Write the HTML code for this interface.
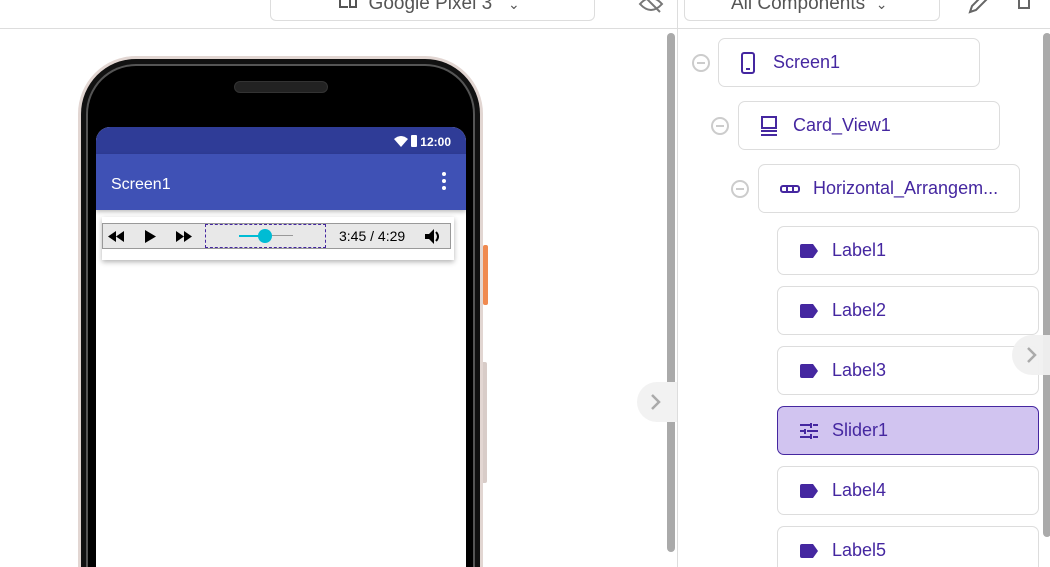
<!DOCTYPE html>
<html style="overflow:hidden;height:567px"><head><style>
*{box-sizing:border-box;margin:0;padding:0}
body{width:1050px;height:567px;overflow:hidden;background:#fff;font-family:"Liberation Sans",sans-serif;position:relative}
.a{position:absolute}
.item{position:absolute;height:49px;border:1px solid #ddd;border-radius:7px;background:#fff;color:#4527a0;font-size:18px;display:flex;align-items:center}
.item svg{position:absolute;left:22px}
.item span{position:absolute;left:54px}
.min{position:absolute;width:18px;height:18px;border:2px solid #ccc;border-radius:50%}
.min:after{content:"";position:absolute;left:3px;top:6px;width:8px;height:2px;background:#ccc}
</style></head><body>
<div class="a" style="left:0;top:28px;width:1050px;height:1px;background:#ddd"></div>
<div class="a" style="left:270px;top:-10px;width:325px;height:31px;border:1px solid #ddd;border-radius:6px"></div>
<div class="a" style="left:338px;top:-7px;font-size:19px;color:#555">
<svg width="20" height="16" style="vertical-align:-2px" viewBox="0 0 20 16"><path d="M2 0v12h8M12 4h6v8h-6z" stroke="#555" stroke-width="2" fill="none"/></svg>
&nbsp;Google Pixel 3 &nbsp;&nbsp;<span style="font-size:14px">&#8964;</span></div>
<svg class="a" style="left:638px;top:-6px" width="26" height="20" viewBox="0 0 26 20"><path d="M2 10q11-12 22 0q-11 12-22 0z" stroke="#777" stroke-width="2" fill="none"/><path d="M4 0L22 18" stroke="#777" stroke-width="2"/></svg>
<div class="a" style="left:677px;top:0;width:1px;height:567px;background:#ddd"></div>
<div class="a" style="left:684px;top:-10px;width:256px;height:31px;border:1px solid #ddd;border-radius:6px"></div>
<div class="a" style="left:731px;top:-7px;font-size:19px;color:#555">All Components &nbsp;<span style="font-size:14px">&#8964;</span></div>
<svg class="a" style="left:966px;top:-4px" width="24" height="18"><path d="M4 16l2-6 12-12 4 4-12 12z" stroke="#666" stroke-width="2" fill="none"/></svg>
<svg class="a" style="left:1017px;top:-4px" width="16" height="18"><path d="M2 0v12h10v-12" stroke="#666" stroke-width="2" fill="none"/></svg>
<div class="a" style="left:667px;top:33px;width:8px;height:519px;background:#aaa;border-radius:4px"></div>
<div class="a" style="left:637px;top:382px;width:40px;height:40px;border-radius:20px 0 0 20px;background:#f2f2f2"></div>
<svg class="a" style="left:650px;top:393px" width="12" height="18"><path d="M2 2l7 7-7 7" stroke="#aaa" stroke-width="2.5" fill="none"/></svg>
<div class="a" style="left:483px;top:245px;width:5px;height:60px;background:#f08a50;border-radius:2px"></div>
<div class="a" style="left:481px;top:362px;width:6px;height:121px;background:#d8ccc8;border-radius:2px"></div>
<div class="a" style="left:78px;top:56px;width:405px;height:511px;border-radius:58px 58px 0 0;background:#e2d6d2"></div>
<div class="a" style="left:81px;top:59px;width:399px;height:508px;border-radius:55px 55px 0 0;background:#111"></div>
<div class="a" style="left:86px;top:64px;width:389px;height:503px;border-radius:50px 50px 0 0;border:2px solid #555;border-bottom:0;background:#000"></div>
<div class="a" style="left:234px;top:81px;width:94px;height:12px;border-radius:6px;background:#222;border:1px solid #333"></div>
<div class="a" style="left:96px;top:127px;width:370px;height:440px;background:#fff;border-radius:14px 14px 0 0;overflow:hidden">
 <div style="height:27px;background:#2f3c97;color:#fff;font-size:12px;font-weight:bold;text-align:right;padding:8px 15px 0 0">
  <svg width="14" height="11" style="vertical-align:-1px"><path d="M0 3q7-6 14 0l-7 8z" fill="#fff"/></svg>
  <svg width="6" height="12" style="vertical-align:-1px"><rect x="0" y="0" width="6" height="12" rx="1" fill="#fff"/></svg> 12:00</div>
 <div style="height:56px;background:#3f51b5;color:#fff;font-size:16px;padding:22px 0 0 15px;position:relative;box-shadow:0 2px 4px rgba(0,0,0,.25)">Screen1
  <div style="position:absolute;right:20px;top:18px;width:4px;line-height:0">
   <div style="width:4px;height:4px;border-radius:2px;background:#fff;margin-bottom:3px"></div><div style="width:4px;height:4px;border-radius:2px;background:#fff;margin-bottom:3px"></div><div style="width:4px;height:4px;border-radius:2px;background:#fff"></div></div></div>
 <div style="position:absolute;left:6px;top:90px;width:352px;height:43px;background:#fff;box-shadow:0 2px 5px rgba(0,0,0,.3)">
  <div style="position:absolute;left:0;top:6px;width:349px;height:26px;background:#e8e8e8;border:1px solid #999">
   <svg class="a" style="left:5px;top:7px" width="18" height="11"><path d="M8 0v11L0 5.5zM16 0v11L8 5.5z" fill="#000"/></svg>
   <svg class="a" style="left:42px;top:6px" width="12" height="13"><path d="M0 0v13l11-6.5z" fill="#000"/></svg>
   <svg class="a" style="left:73px;top:7px" width="18" height="11"><path d="M0 0v11l8-5.5zM8 0v11l8-5.5z" fill="#000"/></svg>
   <div class="a" style="left:102px;top:0;width:121px;height:24px;border:1px dashed #4527a0"></div>
   <div class="a" style="left:136px;top:11px;width:54px;height:1px;background:#999"></div>
   <div class="a" style="left:136px;top:11px;width:26px;height:2px;background:#00bcd4"></div>
   <div class="a" style="left:155px;top:5px;width:14px;height:14px;border-radius:7px;background:#00bcd4"></div>
   <div class="a" style="left:236px;top:4px;font-size:14px;color:#000">3:45 / 4:29</div>
   <svg class="a" style="left:322px;top:5px" width="16" height="15"><path d="M0 5h4l5-5v15l-5-5H0z" fill="#000"/><path d="M11 3q4 4.5 0 9" stroke="#000" stroke-width="2" fill="none"/></svg>
  </div></div>
</div>
<div class="min" style="left:692px;top:54px"></div>
<div class="min" style="left:711px;top:117px"></div>
<div class="min" style="left:731px;top:180px"></div>
<div class="item" style="left:718px;top:38px;width:262px"><svg width="14" height="22" style="left:22px"><rect x="1" y="1" width="12" height="20" rx="2" stroke="#4527a0" stroke-width="2" fill="none"/><rect x="5" y="16" width="4" height="2" fill="#4527a0"/></svg><span>Screen1</span></div>
<div class="item" style="left:738px;top:101px;width:262px"><svg width="18" height="20" style="left:21px"><rect x="2" y="1" width="14" height="11" stroke="#4527a0" stroke-width="2" fill="none"/><rect x="1" y="14" width="16" height="2" fill="#4527a0"/><rect x="1" y="18" width="16" height="2" fill="#4527a0"/></svg><span>Card_View1</span></div>
<div class="item" style="left:758px;top:164px;width:262px"><svg width="20" height="8" style="left:21px"><rect x="1" y="1" width="18" height="6" rx="2" stroke="#4527a0" stroke-width="2" fill="none"/><path d="M7 1v6M13 1v6" stroke="#4527a0" stroke-width="2"/></svg><span>Horizontal_Arrangem...</span></div>
<div class="item" style="left:777px;top:226px;width:262px"><svg width="18" height="14" style="left:22px"><path d="M2 0h11l5 7-5 7H2a2 2 0 0 1-2-2V2a2 2 0 0 1 2-2z" fill="#4527a0"/></svg><span>Label1</span></div>
<div class="item" style="left:777px;top:286px;width:262px"><svg width="18" height="14" style="left:22px"><path d="M2 0h11l5 7-5 7H2a2 2 0 0 1-2-2V2a2 2 0 0 1 2-2z" fill="#4527a0"/></svg><span>Label2</span></div>
<div class="item" style="left:777px;top:346px;width:262px"><svg width="18" height="14" style="left:22px"><path d="M2 0h11l5 7-5 7H2a2 2 0 0 1-2-2V2a2 2 0 0 1 2-2z" fill="#4527a0"/></svg><span>Label3</span></div>
<div class="item" style="left:777px;top:406px;width:262px;background:#d1c4f0;border-color:#4527a0"><svg width="18" height="16" style="left:22px"><path d="M0 2h10M13 2h5M0 8h4M7 8h11M0 14h10M13 14h5M11 0v5M5 6v5M11 11v5" stroke="#4527a0" stroke-width="2"/></svg><span>Slider1</span></div>
<div class="item" style="left:777px;top:466px;width:262px"><svg width="18" height="14" style="left:22px"><path d="M2 0h11l5 7-5 7H2a2 2 0 0 1-2-2V2a2 2 0 0 1 2-2z" fill="#4527a0"/></svg><span>Label4</span></div>
<div class="item" style="left:777px;top:526px;width:262px;height:41px;border-bottom:0;border-radius:7px 7px 0 0"><svg width="18" height="14" style="left:22px;top:17px"><path d="M2 0h11l5 7-5 7H2a2 2 0 0 1-2-2V2a2 2 0 0 1 2-2z" fill="#4527a0"/></svg><span style="top:13px">Label5</span></div>
<div class="a" style="left:1043px;top:33px;width:8px;height:504px;background:#aaa;border-radius:4px"></div>
<div class="a" style="left:1012px;top:335px;width:40px;height:40px;border-radius:20px 0 0 20px;background:rgba(240,240,240,.95)"></div>
<svg class="a" style="left:1026px;top:346px" width="12" height="18"><path d="M2 2l7 7-7 7" stroke="#aaa" stroke-width="2.5" fill="none"/></svg>
</body></html>
